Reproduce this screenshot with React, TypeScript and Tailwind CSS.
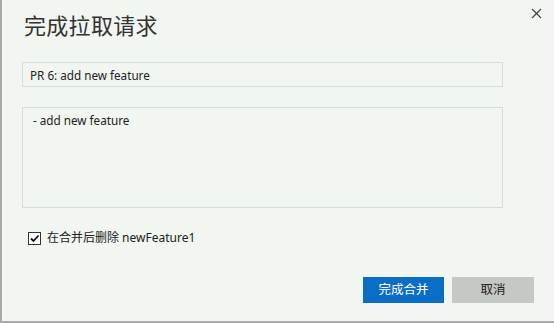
import React, { useState } from 'react';

export default function App() {
  const [title, setTitle] = useState('PR 6: add new feature');
  const [desc, setDesc] = useState('- add new feature');
  const [deleteBranch, setDeleteBranch] = useState(true);

  const font = { fontFamily: '"Noto Sans", "Noto Sans CJK SC", sans-serif' };

  return (
    <div
      className="w-[554px] h-[323px] bg-[#f1f6f1] border-l-2 border-b-2 border-[#a9aba9] text-[#222] flex flex-col overflow-hidden"
      style={font}
    >
      {/* Header */}
      <div className="flex items-start justify-between pl-[22px] pr-[8px] pt-[11px]">
        <h1 className="text-[22px] leading-[28px] text-[#333] tracking-[0.3px]">完成拉取请求</h1>
        <button className="mt-[-8px] w-[20px] h-[20px] flex items-center justify-center text-[#444]">
          <svg width="11" height="11" viewBox="0 0 11 11" stroke="currentColor" strokeWidth="1.2">
            <path d="M1 1 L10 10 M10 1 L1 10" />
          </svg>
        </button>
      </div>

      {/* Form */}
      <div className="flex flex-col pl-[20px] pr-[50px] mt-[23px]">
        <input
          value={title}
          onChange={(e) => setTitle(e.target.value)}
          className="h-[25px] w-[481px] px-[7px] text-[11.7px] bg-[#f1f6f1] border border-[#d6dcd6] outline-none text-[#222]"
          style={font}
        />
        <textarea
          value={desc}
          onChange={(e) => setDesc(e.target.value)}
          className="mt-[20px] h-[101px] w-[481px] px-[10px] py-[4px] text-[11.7px] bg-[#f1f6f1] border border-[#d6dcd6] outline-none resize-none text-[#222]"
          style={font}
        />
        <label className="flex items-center gap-[6px] mt-[21px] ml-[6px] text-[12px] text-[#222] cursor-pointer">
          <input
            type="checkbox"
            checked={deleteBranch}
            onChange={(e) => setDeleteBranch(e.target.checked)}
            className="hidden"
          />
          <span className="w-[13px] h-[13px] bg-white border border-[#333] flex items-center justify-center">
            {deleteBranch && (
              <svg width="11" height="11" viewBox="0 0 11 11" fill="none" stroke="#111" strokeWidth="1.8">
                <path d="M2 5.5 L4.5 8 L9.5 2.5" />
              </svg>
            )}
          </span>
          <span>在合并后删除 newFeature1</span>
        </label>
      </div>

      {/* Footer */}
      <div className="flex justify-end gap-[8px] pr-[20px] mt-[30px]">
        <button className="w-[81px] h-[26px] bg-[#0b6ec6] text-white text-[12.5px]">完成合并</button>
        <button className="w-[82px] h-[26px] bg-[#c5c9c5] text-[#222] text-[12.5px]">取消</button>
      </div>
    </div>
  );
}
